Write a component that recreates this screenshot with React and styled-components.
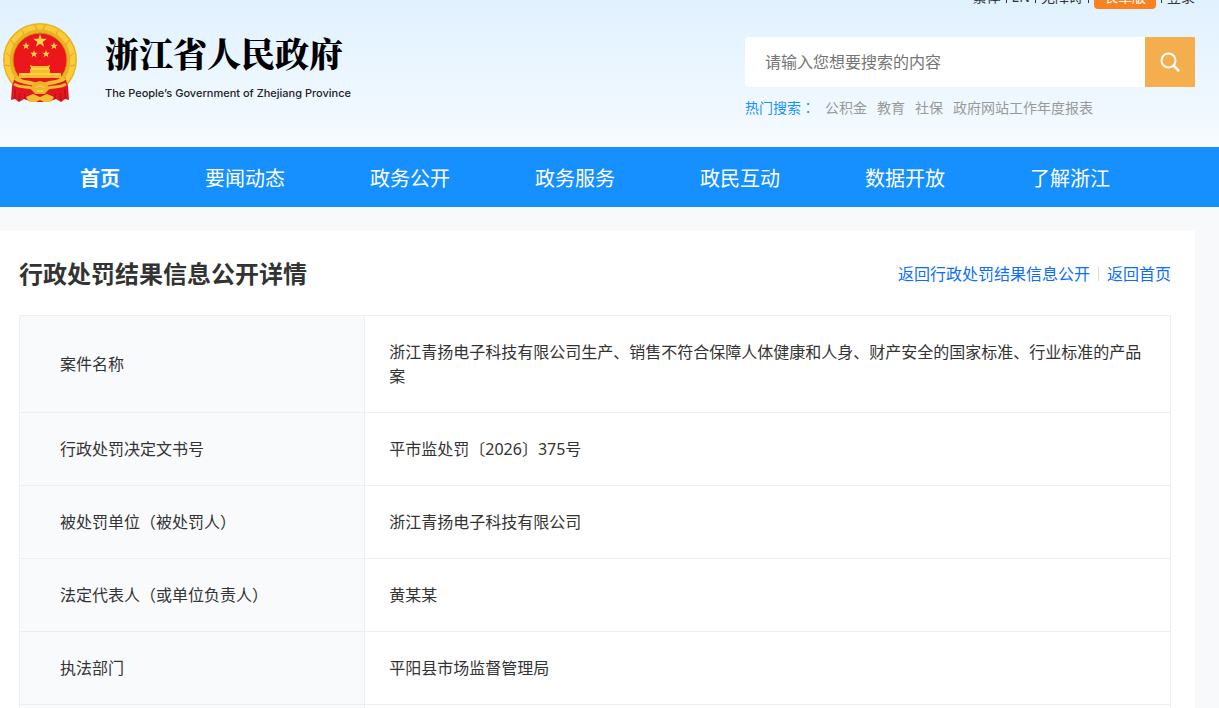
import React from "react";
import styled, { createGlobalStyle } from "styled-components";

const GlobalStyle = createGlobalStyle`
  *, *::before, *::after { box-sizing: border-box; }
  body {
    margin: 0;
    background: #f8f9fb;
    color: #333;
    font-family: "Noto Sans", "Noto Sans CJK SC", sans-serif;
    font-size: 16px;
    line-height: 24px;
  }
  a { color: inherit; text-decoration: none; }
`;

const Page = styled.div`
  height: 100vh;
  overflow: hidden;
`;

const Header = styled.header`
  background: linear-gradient(#e0f1ff, #f6fbff);
  padding-right: 24px;
`;

const TopBar = styled.div`
  display: flex;
  justify-content: flex-end;
  align-items: flex-end;
  height: 9px;
  overflow: hidden;
  font-size: 14px;
  line-height: 24px;
`;

const TopLink = styled.a`
  color: #333;
`;

const TopDivider = styled.span`
  width: 1px;
  height: 12px;
  margin: 0 5px 6px;
  background: #333;
`;

const ElderButton = styled.button`
  width: 62px;
  height: 24px;
  padding: 0;
  border: 0;
  border-radius: 4px;
  background: #f98220;
  color: #fff;
  font: inherit;
`;

const HeaderMain = styled.div`
  display: flex;
  justify-content: space-between;
  height: 138px;
`;

const Brand = styled.a`
  display: flex;
  gap: 27px;
  padding: 14px 0 0 2px;
  color: #000;
`;

const BrandText = styled.div`
  display: flex;
  flex-direction: column;
  gap: 8px;
  padding-top: 6px;
`;

const BrandName = styled.strong`
  font-family: "Noto Serif CJK SC", "Noto Sans CJK SC", serif;
  font-size: 34px;
  font-weight: 900;
  line-height: 48px;
`;

const BrandSub = styled.span`
  color: #222;
  font-family: Inter, sans-serif;
  font-size: 11px;
  font-weight: 500;
  line-height: 16px;
`;

const SearchArea = styled.div`
  width: 450px;
  padding-top: 28px;
`;

const SearchForm = styled.form`
  display: flex;
  height: 50px;
`;

const SearchInput = styled.input`
  flex: 1;
  min-width: 0;
  padding: 0 20px;
  border: 0;
  border-radius: 4px 0 0 4px;
  background: #fff;
  font: inherit;
  &::placeholder { color: #757575; opacity: 1; }
`;

const SearchButton = styled.button`
  display: grid;
  place-items: center;
  width: 50px;
  padding: 0;
  border: 0;
  background: #f5ae4e;
`;

const HotSearch = styled.div`
  display: flex;
  align-items: baseline;
  gap: 10px;
  padding-top: 9px;
  font-size: 14px;
  line-height: 24px;
  color: #999;
`;

const HotLabel = styled.span`
  color: #1890ff;
`;

const Colon = styled.span`
  font-family: "Noto Sans CJK TC", sans-serif;
  line-height: 1;
`;

const Nav = styled.nav`
  display: flex;
  gap: 85px;
  padding: 4px 80px 0;
  background: #1690ff;
`;

const NavLink = styled.a`
  color: #fff;
  font-size: 20px;
  font-weight: ${(p) => (p.$active ? 700 : 400)};
  line-height: 56px;
  white-space: nowrap;
`;

const Card = styled.main`
  margin: 24px 24px 0 0;
  padding: 24px 24px 24px 19px;
  background: #fff;
`;

const CardHead = styled.div`
  display: flex;
  justify-content: space-between;
  align-items: center;
  height: 60px;
  padding-bottom: 22px;
`;

const Title = styled.h1`
  margin: 0;
  font-size: 24px;
  line-height: 36px;
`;

const BackLinks = styled.div`
  display: flex;
  align-items: center;
  gap: 8px;
  color: #0d6efd;
`;

const LinkDivider = styled.span`
  width: 1px;
  height: 14px;
  background: #ddd;
`;

const DetailTable = styled.table`
  width: 100%;
  border-collapse: collapse;
  table-layout: fixed;
`;

const LabelCell = styled.th`
  width: 30%;
  height: 73px;
  padding: 24px 24px 24px 40px;
  border: 1px solid #eee;
  background: #f9fafc;
  font-weight: 400;
  text-align: left;
`;

const ValueCell = styled.td`
  padding: 24px;
  border: 1px solid #eee;
`;

const starPoints = (cx, cy, r) =>
  Array.from({ length: 10 }, (_, i) => {
    const radius = i % 2 ? r * 0.4 : r;
    const a = (i * Math.PI) / 5 - Math.PI / 2;
    return `${(cx + radius * Math.cos(a)).toFixed(1)},${(cy + radius * Math.sin(a)).toFixed(1)}`;
  }).join(" ");

const Emblem = () => (
  <svg width="76" height="82" viewBox="0 0 76 82" aria-hidden="true">
    <circle cx="38" cy="37" r="37" fill="#eab125" />
    <circle cx="38" cy="37" r="33" fill="none" stroke="#f9cd38" strokeWidth="5" />
    <path d="M4 30 L9 34 M3 42 L8 43 M9 17 L13 23 M20 7 L22 12 M33 2 L35 7 M43 2 L41 7 M56 7 L54 12 M67 17 L63 23 M72 30 L67 34 M73 42 L68 43" stroke="#dfa31f" strokeWidth="1" />
    <circle cx="38" cy="37" r="27" fill="#ec161d" stroke="#d29418" />
    <polygon points={starPoints(38, 18, 7)} fill="#fbd84b" />
    <polygon points={starPoints(24, 23, 4)} fill="#fbd84b" />
    <polygon points={starPoints(52, 23, 4)} fill="#fbd84b" />
    <polygon points={starPoints(32, 31, 4)} fill="#fbd84b" />
    <polygon points={starPoints(44, 31, 4)} fill="#fbd84b" />
    <path d="M28 42 L31 43 H45 L48 42 L47 46 H48 V50 H59 V55 H17 V50 H28 V46 H29Z" fill="#f4bd2b" />
    <path d="M29 46 H47 M18 51 H58" stroke="#ffdf6c" />
    <path d="M13 54 L10 63 L9 77 L13 76 L17 79 L22 76 L30 79 H46 L54 76 L59 79 L63 76 L67 77 L66 63 L63 54 L59 57 H17Z" fill="#e0171f" />
    <path d="M13 67 V76 M18 70 L17 78 M23 71 V76 M53 71 V76 M58 70 L59 78 M63 67 V76" stroke="#b50f16" />
    <path d="M13 55 C21 61 28 58 34 62 H42 C48 58 55 61 63 55" fill="none" stroke="#f4bd2f" strokeWidth="4" />
    <path d="M12 61 C20 66 26 62 32 66 M64 61 C56 66 50 62 44 66" fill="none" stroke="#f4bd2f" strokeWidth="3" />
    <path d="M31 60 L38 58 L45 60 L47 66 L43 71 H33 L29 66Z" fill="#f0b326" />
    <path d="M34 65 C36 62 40 62 42 65 M34 68 H42" fill="none" stroke="#ffdf6c" />
    <path d="M24 74 L31 71 L38 74 L45 71 L52 74 L49 79 H42 L38 77 L34 79 H27Z" fill="#f2bd30" />
  </svg>
);

const SearchIcon = () => (
  <svg width="20" height="20" viewBox="0 0 20 20" fill="none" stroke="#fff" strokeWidth="2" aria-hidden="true">
    <circle cx="8.5" cy="8.5" r="7" />
    <path d="M13.5 13.5 L19 19" strokeWidth="2.5" />
  </svg>
);

const navItems = ["首页", "要闻动态", "政务公开", "政务服务", "政民互动", "数据开放", "了解浙江"];
const hotWords = ["公积金", "教育", "社保", "政府网站工作年度报表"];
const details = [
  ["案件名称", "浙江青扬电子科技有限公司生产、销售不符合保障人体健康和人身、财产安全的国家标准、行业标准的产品案"],
  ["行政处罚决定文书号", "平市监处罚〔2026〕375号"],
  ["被处罚单位（被处罚人）", "浙江青扬电子科技有限公司"],
  ["法定代表人（或单位负责人）", "黄某某"],
  ["执法部门", "平阳县市场监督管理局"],
  ["", ""],
];

export default function App() {
  return (
    <Page lang="zh-CN">
      <GlobalStyle />
      <Header>
        <TopBar>
          <TopLink href="#">繁体</TopLink>
          <TopDivider />
          <TopLink href="#">EN</TopLink>
          <TopDivider />
          <TopLink href="#">无障碍</TopLink>
          <TopDivider />
          <ElderButton type="button">长辈版</ElderButton>
          <TopDivider />
          <TopLink href="#">登录</TopLink>
        </TopBar>
        <HeaderMain>
          <Brand href="#">
            <Emblem />
            <BrandText>
              <BrandName>浙江省人民政府</BrandName>
              <BrandSub>The People’s Government of Zhejiang Province</BrandSub>
            </BrandText>
          </Brand>
          <SearchArea>
            <SearchForm role="search">
              <SearchInput type="text" aria-label="搜索" placeholder="请输入您想要搜索的内容" />
              <SearchButton type="submit" aria-label="搜索">
                <SearchIcon />
              </SearchButton>
            </SearchForm>
            <HotSearch>
              <HotLabel>热门搜索<Colon lang="zh-TW">：</Colon></HotLabel>
              {hotWords.map((word) => (
                <a key={word} href="#">{word}</a>
              ))}
            </HotSearch>
          </SearchArea>
        </HeaderMain>
      </Header>
      <Nav>
        {navItems.map((item, i) => (
          <NavLink key={item} href="#" $active={i === 0}>{item}</NavLink>
        ))}
      </Nav>
      <Card>
        <CardHead>
          <Title>行政处罚结果信息公开详情</Title>
          <BackLinks>
            <a href="#">返回行政处罚结果信息公开</a>
            <LinkDivider />
            <a href="#">返回首页</a>
          </BackLinks>
        </CardHead>
        <DetailTable>
          <tbody>
            {details.map(([label, value]) => (
              <tr key={label}>
                <LabelCell scope="row">{label}</LabelCell>
                <ValueCell>{value}</ValueCell>
              </tr>
            ))}
          </tbody>
        </DetailTable>
      </Card>
    </Page>
  );
}
